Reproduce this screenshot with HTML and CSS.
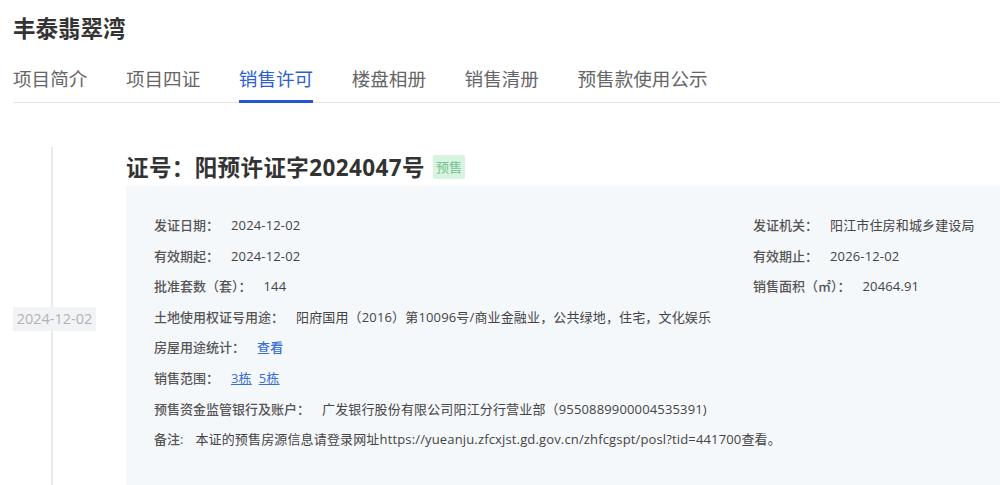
FILE: index.html
```html
<!DOCTYPE html>
<html lang="zh-CN">
<head>
  <meta charset="UTF-8" />
  <title>丰泰翡翠湾 - 销售许可</title>
  <link rel="stylesheet" href="styles.css">
</head>
<body>
  <h1 class="project-name">丰泰翡翠湾</h1>

  <ul class="tabs">
    <li>项目简介</li>
    <li>项目四证</li>
    <li class="active">销售许可</li>
    <li>楼盘相册</li>
    <li>销售清册</li>
    <li>预售款使用公示</li>
  </ul>

  <div class="timeline">
    <div class="timeline-item">
      <div class="time-col">
        <span class="time">2024-12-02</span>
      </div>
      <div class="cert">
        <h2 class="cert-title">证号：阳预许证字2024047号<span class="badge">预售</span></h2>
        <div class="cert-body">
          <div class="row two">
            <div><span class="label">发证日期：</span><span class="value">2024-12-02</span></div>
            <div class="right"><span class="label">发证机关：</span><span class="value">阳江市住房和城乡建设局</span></div>
          </div>
          <div class="row two">
            <div><span class="label">有效期起：</span><span class="value">2024-12-02</span></div>
            <div class="right"><span class="label">有效期止：</span><span class="value">2026-12-02</span></div>
          </div>
          <div class="row two">
            <div><span class="label">批准套数（套）：</span><span class="value">144</span></div>
            <div class="right"><span class="label">销售面积（㎡）：</span><span class="value">20464.91</span></div>
          </div>
          <div class="row">
            <span class="label">土地使用权证号用途：</span><span class="value">阳府国用（2016）第10096号/商业金融业，公共绿地，住宅，文化娱乐</span>
          </div>
          <div class="row">
            <span class="label">房屋用途统计：</span><a class="value link plain" href="#">查看</a>
          </div>
          <div class="row">
            <span class="label">销售范围：</span><span class="value"><a class="link" href="#">3栋</a><a class="link" href="#">5栋</a></span>
          </div>
          <div class="row">
            <span class="label">预售资金监管银行及账户：</span><span class="value">广发银行股份有限公司阳江分行营业部（9550889900004535391)</span>
          </div>
          <div class="row">
            <span class="label">备注:</span><span class="value">本证的预售房源信息请登录网址https://yueanju.zfcxjst.gd.gov.cn/zhfcgspt/posl?tid=441700查看。</span>
          </div>
        </div>
      </div>
    </div>
  </div>
</body>
</html>
```

FILE: styles.css
```css
body {
  margin: 0;
  padding: 0 0 0 13px;
  font-family: "Open Sans", "Noto Sans CJK SC", sans-serif;
  color: #333;
  background: #fff;
  overflow: hidden;
}
.project-name {
  margin: 0;
  padding-top: 14px;
  height: 32px;
  font-size: 22.5px;
  line-height: 30px;
  font-weight: bold;
  color: #333;
}
.tabs {
  list-style: none;
  margin: 20px 0 0 0;
  padding: 0;
  display: flex;
  border-bottom: 1px solid #e6e6e6;
}
.tabs li {
  font-size: 18.6px;
  line-height: 26px;
  color: #666;
  margin-right: 38.5px;
  padding-bottom: 8px;
  border-bottom: 3px solid transparent;
  margin-bottom: -1px;
}
.tabs li.active {
  color: #2d5fce;
  border-bottom-color: #2456d0;
}
.timeline {
  margin-top: 44px;
}
.timeline-item {
  display: flex;
}
.time-col {
  position: relative;
  width: 113px;
  flex: none;
  display: flex;
  align-items: center;
}
.time-col::before {
  content: "";
  position: absolute;
  left: 38px;
  top: 0;
  bottom: -40px;
  width: 2px;
  background: #e8eaee;
}
.time {
  position: relative;
  display: inline-block;
  width: 83px;
  height: 24px;
  line-height: 24px;
  text-align: center;
  background: #f1f3f6;
  color: #b3b3b3;
  font-size: 14.5px;
}
.cert {
  flex: 1;
  min-width: 0;
}
.cert-title {
  margin: 0;
  height: 39px;
  display: flex;
  align-items: center;
  font-family: "Open Sans", "Noto Sans CJK TC", sans-serif;
  font-size: 22.5px;
  font-weight: bold;
  color: #333;
  letter-spacing: 0.4px;
}
.badge {
  display: inline-block;
  margin-left: 8px;
  padding: 0 3px;
  height: 24px;
  line-height: 24px;
  font-family: "Noto Sans CJK SC", sans-serif;
  font-size: 13px;
  font-weight: normal;
  letter-spacing: 0;
  background: #d8f3e0;
  color: #74c393;
  border-radius: 2px;
}
.cert-body {
  background: #f5f8fb;
  padding: 24px 0 37px 28px;
}
.row {
  height: 30.6px;
  line-height: 30px;
  font-size: 13px;
  display: flex;
  white-space: nowrap;
}
.row.two > div {
  width: 599px;
}
.row.two > .right {
  width: auto;
}
.label {
  color: #555;
  font-weight: 500;
  margin-right: 12px;
}
.value {
  color: #444;
  letter-spacing: 0.15px;
}
.link {
  color: #3b6fd4;
  margin-right: 7px;
}
.link.plain {
  text-decoration: none;
  font-weight: 500;
}
```
